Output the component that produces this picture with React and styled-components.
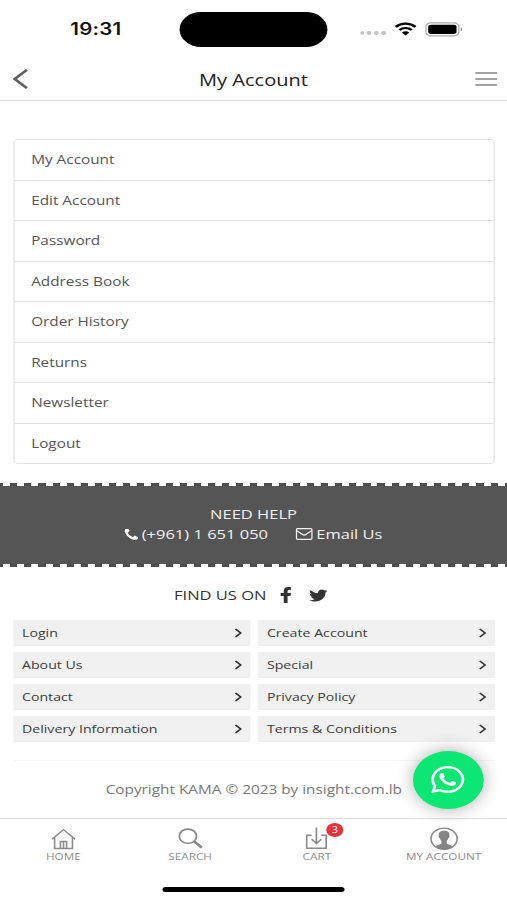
import React from "react";
import styled, { createGlobalStyle, css } from "styled-components";
import { FaFacebookF, FaTwitter, FaWhatsapp } from "react-icons/fa";

const WIDTH = 415;
const STRETCH = 507 / WIDTH;

const GlobalStyle = createGlobalStyle`
  * {
    box-sizing: border-box;
  }
  body {
    margin: 0;
    overflow: hidden;
    background: #fff;
    font-family: "Open Sans", "Noto Sans", sans-serif;
  }
`;

const Screen = styled.div`
  width: ${WIDTH}px;
  height: 900px;
  display: flex;
  flex-direction: column;
  overflow: hidden;
  position: relative;
  background: #fff;
  transform: scaleX(${STRETCH});
  transform-origin: 0 0;
`;

const StatusBar = styled.div`
  height: 58px;
  flex: none;
  display: grid;
  grid-template-columns: 1fr 121px 1fr;
  align-items: center;
`;

const Time = styled.div`
  padding: 0 0 0 10px;
  text-align: center;
  font: 600 16.8px Inter, sans-serif;
  letter-spacing: 0.2px;
  color: #111;
`;

const Island = styled.div`
  height: 35px;
  border-radius: 18px;
  background: #000;
  margin-top: 1px;
`;

const StatusIcons = styled.div`
  display: flex;
  align-items: center;
  padding-left: 26.5px;
  gap: 7px;
  svg {
    display: block;
  }
`;

const Signal = styled.div`
  display: flex;
  gap: 2.3px;
  padding-top: 8px;
  i {
    width: 3.6px;
    height: 4px;
    border-radius: 50%;
    background: #c4c4c4;
  }
`;

const Header = styled.header`
  height: 43px;
  flex: none;
  display: flex;
  align-items: center;
  justify-content: space-between;
  padding: 0 8px 0 10px;
  border-bottom: 1px solid #dcdcdc;
  svg {
    display: block;
  }
`;

const Title = styled.h1`
  margin: 0 0 0 3px;
  font-size: 16.4px;
  font-weight: 400;
  color: #222;
`;

const Menu = styled.ul`
  list-style: none;
  margin: 38px 10px 0 10.5px;
  padding: 0;
  flex: none;
  border: 1px solid #e2e2e2;
  border-radius: 4px;
`;

const MenuItem = styled.li`
  height: 40.5px;
  padding-left: 14px;
  font-size: 12.55px;
  line-height: 40px;
  color: #555;
  & + & {
    border-top: 1px solid #e2e2e2;
  }
  &:first-child {
    height: 39.5px;
  }
`;

const stitches = css`
  content: "";
  display: block;
  height: 3px;
  background: repeating-linear-gradient(
    90deg,
    #4d4d4d 0 2.6px,
    #fff 2.6px 8.3px,
    #4d4d4d 8.3px 11.565px
  );
`;

const Help = styled.section`
  height: 84px;
  margin-top: 18.5px;
  flex: none;
  display: flex;
  flex-direction: column;
  justify-content: space-between;
  background: #555;
  color: #f2f2f2;
  text-align: center;
  font-size: 13.5px;
  line-height: 20.5px;
  &::before,
  &::after {
    ${stitches}
  }
`;

const HelpText = styled.div`
  margin-top: -1px;
`;

const Contacts = styled.div`
  display: flex;
  justify-content: center;
  gap: 22.5px;
`;

const Contact = styled.span`
  display: flex;
  align-items: center;
  gap: 3px;
`;

const Social = styled.div`
  height: 53px;
  flex: none;
  display: flex;
  align-items: center;
  justify-content: center;
  gap: 8px;
  padding: 4px 5px 0 0;
  font-size: 13.5px;
  color: #333;
  svg {
    display: block;
  }
  svg + svg {
    margin-left: 2.5px;
  }
`;

const Links = styled.div`
  flex: none;
  display: grid;
  grid-template-columns: 1fr 1fr;
  gap: 6px 6.5px;
  margin: 0 10px 0 10.5px;
`;

const LinkItem = styled.div`
  height: 26px;
  display: flex;
  align-items: center;
  justify-content: space-between;
  padding: 0 7px 0 7.5px;
  background: #f0f0f0;
  font-size: 11.6px;
  color: #3c3c3c;
`;

const Copyright = styled.div`
  margin: 18px 10px 0 10.5px;
  flex: 1;
  border-top: 1px solid #f5f5f5;
  padding-top: 19px;
  text-align: center;
  font-size: 12.55px;
  line-height: 20px;
  white-space: nowrap;
  color: #777;
`;

const WhatsApp = styled.div`
  position: absolute;
  right: 19.5px;
  top: 751px;
  width: 58px;
  height: 58px;
  border-radius: 50%;
  display: flex;
  align-items: center;
  justify-content: center;
  padding-bottom: 2px;
  background: #0ce673;
  color: #fff;
  box-shadow: 0 0 16px rgba(0, 0, 0, 0.32);
`;

const TabBar = styled.nav`
  height: 82px;
  flex: none;
  display: grid;
  grid-template-columns: repeat(4, 1fr);
  grid-template-rows: 1fr auto;
  border-top: 1px solid #dedede;
  background: #fff;
`;

const Tab = styled.div`
  display: flex;
  flex-direction: column;
  align-items: center;
  padding-top: 8px;
  font-size: 9.6px;
  line-height: 12px;
  white-space: nowrap;
  color: #8e8e8e;
  svg {
    display: block;
  }
`;

const IconBox = styled.div`
  position: relative;
  height: 24px;
`;

const Badge = styled.span`
  position: absolute;
  left: 16.5px;
  top: -4.5px;
  width: 14.5px;
  height: 14.5px;
  border-radius: 50%;
  background: #e4333b;
  color: #fff;
  font-size: 9px;
  line-height: 14px;
  text-align: center;
`;

const HomeIndicator = styled.div`
  grid-column: 1 / -1;
  justify-self: center;
  width: 148.5px;
  height: 5px;
  border-radius: 3px;
  margin-bottom: 8px;
  background: #000;
`;

const WifiIcon = () => (
  <svg width="18" height="14" viewBox="0 0 18 14" fill="none" stroke="#000">
    <path d="M.9 4.9C5.4.5 12.6.5 17.1 4.9" strokeWidth="2.4" />
    <path d="M3.9 8C6.8 5.3 11.2 5.3 14.1 8" strokeWidth="2.2" />
    <path d="M6 10.4c1.8-1.7 4.2-1.7 6 0L9 13.4z" fill="#000" stroke="none" />
  </svg>
);

const BatteryIcon = () => (
  <svg width="31" height="15" viewBox="0 0 31 15">
    <rect x=".6" y=".9" width="27" height="13" rx="4" fill="none" stroke="#aaa" strokeWidth="1.1" />
    <rect x="2.5" y="2.8" width="23.2" height="9.2" rx="2.4" />
    <path d="M29.2 5.3v4.2c1.5-.7 1.5-3.5 0-4.2" fill="#888" />
  </svg>
);

const BackIcon = () => (
  <svg width="13" height="20" viewBox="0 0 13 20" fill="none" stroke="#606060" strokeWidth="2.4">
    <path d="M12 .9 2 10l10 9.1" />
  </svg>
);

const MenuIcon = () => (
  <svg width="18" height="16" viewBox="0 0 18 16" stroke="#828282" strokeWidth="1.7">
    <path d="M0 2h18M0 8h18M0 14h18" />
  </svg>
);

const PhoneIcon = () => (
  <svg width="11" height="11" viewBox="192 256 1408 1280" preserveAspectRatio="none" fill="#fff">
    <path d="M1600 1240q0 27-10 70.5t-21 68.5q-21 50-122 106-94 51-186 51-27 0-53-3.5t-57.5-12.5-47-14.5-55.5-20.5-49-18q-98-35-175-83-127-79-264-216t-216-264q-48-77-83-175-3-9-18-49t-20.5-55.5-14.5-47-12.5-57.5-3.5-53q0-92 51-186 56-101 106-122 25-11 68.5-21t70.5-10q14 0 21 3 18 6 53 76 11 19 30 54t35 63.5 31 53.5q3 4 17.5 25t21.5 35.5 7 28.5q0 20-28.5 50t-62 55-62 53-28.5 46q0 9 5 22.5t8.5 20.5 14 24 11.5 19q76 137 174 235t235 174q2 1 19 11.5t24 14 20.5 8.5 22.5 5q18 0 46-28.5t53-62 55-62 50-28.5q14 0 28.5 7t35.5 21.5 25 17.5q25 15 53.5 31t63.5 35 54 30q70 35 76 53 3 7 3 21z" />
  </svg>
);

const MailIcon = () => (
  <svg width="14" height="12" viewBox="0 0 14 12" fill="none" stroke="#f2f2f2" strokeWidth="1.2">
    <rect x=".6" y=".7" width="12.8" height="10.6" rx="1" />
    <path d="M.8 2.6c1.5 1.5 3.4 2.7 4.8 3.9.9.8 1.9.8 2.8 0 1.4-1.2 3.3-2.4 4.8-3.9" />
  </svg>
);

const ChevronIcon = () => (
  <svg width="6" height="10" viewBox="0 0 6 10" fill="none" stroke="#333" strokeWidth="1.5">
    <path d="M.8 1 5 5 .8 9" />
  </svg>
);

const HomeIcon = () => (
  <svg width="20" height="24" viewBox="0 0 20 24" fill="none" stroke="#8a8a8a" strokeWidth="1.3">
    <path d="M.5 12.3 10 2.6l9.5 9.7M2.7 10.5v11h14.6v-11M7.500 21.500v-7h5v7M10 14.500v7" />
  </svg>
);

const SearchIcon = () => (
  <svg width="20" height="24" viewBox="0 0 20 24" fill="none" stroke="#8a8a8a">
    <circle cx="7.8" cy="9.2" r="7.1" strokeWidth="1.6" />
    <path d="m12.9 14.3 6.3 6.3" strokeWidth="2.4" />
  </svg>
);

const CartIcon = () => (
  <svg width="18" height="24" viewBox="0 0 18 24" fill="none" stroke="#8a8a8a" strokeWidth="1.4">
    <path d="M5 8.2H1v13.1h16V8.2h-4M9 .5v15.6M5 12.2l4 4.2 4-4.2" />
  </svg>
);

const AccountIcon = () => (
  <svg width="23" height="24" viewBox="0 0 23 24">
    <circle cx="11.5" cy="11.8" r="10.7" fill="none" stroke="#8a8a8a" strokeWidth="1.3" />
    <path
      d="M11.5 3.8C8.3 3.8 6.900 5.700 7.200 8.700C6.700 9.200 7.300 11 8 11.300C8.300 12.600 8.700 13.300 9.300 13.900V16.300C8.500 17.800 5.800 17.900 4 19.400C8 23.400 15 23.400 19 19.400C17.200 17.900 14.500 17.800 13.700 16.300V13.900C14.300 13.300 14.700 12.600 15 11.300C15.700 11 16.300 9.200 15.800 8.700C16.100 5.700 14.700 3.800 11.500 3.800Z"
      fill="#858585"
    />
  </svg>
);

const menuItems = [
  "My Account",
  "Edit Account",
  "Password",
  "Address Book",
  "Order History",
  "Returns",
  "Newsletter",
  "Logout",
];

const links = [
  "Login",
  "Create Account",
  "About Us",
  "Special",
  "Contact",
  "Privacy Policy",
  "Delivery Information",
  "Terms & Conditions",
];

const tabs = [
  { label: "HOME", Icon: HomeIcon },
  { label: "SEARCH", Icon: SearchIcon },
  { label: "CART", Icon: CartIcon, count: 3 },
  { label: "MY ACCOUNT", Icon: AccountIcon },
];

const App = () => {
  return (
    <>
      <GlobalStyle />
      <Screen>
        <StatusBar>
          <Time>19:31</Time>
          <Island />
          <StatusIcons>
            <Signal>
              <i />
              <i />
              <i />
              <i />
            </Signal>
            <WifiIcon />
            <BatteryIcon />
          </StatusIcons>
        </StatusBar>
        <Header>
          <BackIcon />
          <Title>My Account</Title>
          <MenuIcon />
        </Header>
        <Menu>
          {menuItems.map((item) => (
            <MenuItem key={item}>{item}</MenuItem>
          ))}
        </Menu>
        <Help>
          <HelpText>
            NEED HELP
            <Contacts>
              <Contact>
                <PhoneIcon />
                (+961) 1 651 050
              </Contact>
              <Contact>
                <MailIcon />
                Email Us
              </Contact>
            </Contacts>
          </HelpText>
        </Help>
        <Social>
          FIND US ON
          <FaFacebookF size={16} />
          <FaTwitter size={15} />
        </Social>
        <Links>
          {links.map((link) => (
            <LinkItem key={link}>
              {link}
              <ChevronIcon />
            </LinkItem>
          ))}
        </Links>
        <Copyright>Copyright KAMA © 2023 by insight.com.lb</Copyright>
        <TabBar>
          {tabs.map(({ label, Icon, count }) => (
            <Tab key={label}>
              <IconBox>
                <Icon />
                {count && <Badge>{count}</Badge>}
              </IconBox>
              {label}
            </Tab>
          ))}
          <HomeIndicator />
        </TabBar>
        <WhatsApp>
          <FaWhatsapp size={31} />
        </WhatsApp>
      </Screen>
    </>
  );
};

export default App;
